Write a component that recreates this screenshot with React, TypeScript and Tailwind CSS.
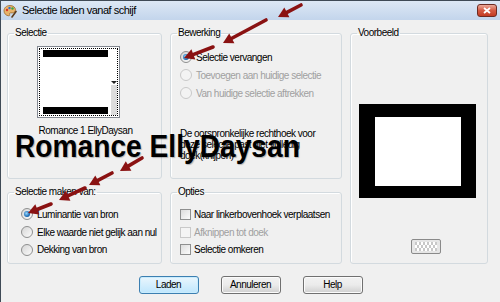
import React from 'react';

// Vista-stijl dialoog "Selectie laden vanaf schijf" met rode pijltjes en watermerk-tekst.

const arrows: [number, number, number, number][] = [
  [300, 4, 277, 16],
  [265, 19, 222, 42],
  [212, 46, 183, 57],
  [141, 157, 119, 170],
  [111, 172, 88, 184],
  [84, 187, 58, 199],
  [50, 203, 27, 212],
];

function Arrow({ t }: { t: [number, number, number, number] }) {
  const [x1, y1, x2, y2] = t;
  const dx = x2 - x1;
  const dy = y2 - y1;
  const len = Math.hypot(dx, dy);
  const ux = dx / len;
  const uy = dy / len;
  const L = 10;
  const W = 5.5;
  const bx = x2 - ux * L;
  const by = y2 - uy * L;
  const nx = -uy;
  const ny = ux;
  const pts = `${x2},${y2} ${bx + nx * W},${by + ny * W} ${bx - nx * W},${by - ny * W}`;
  return (
    <g>
      <line x1={x1} y1={y1} x2={bx + ux} y2={by + uy} stroke="#8a1212" strokeWidth={3.6} strokeLinecap="round" />
      <polygon points={pts} fill="#8a1212" />
    </g>
  );
}

const Radio = ({ checked, disabled }: { checked?: boolean; disabled?: boolean }) => (
  <span
    className={`w-[12px] h-[12px] rounded-full border flex items-center justify-center shrink-0 ${
      disabled ? 'border-[#c9c9c9] bg-[#f3f3f3]' : 'border-[#8e8f8f] bg-gradient-to-br from-[#d6d6d6] to-[#fbfbfb]'
    }`}
  >
    {checked && (
      <span className="w-[6px] h-[6px] rounded-full bg-[radial-gradient(circle_at_40%_40%,#9ad6fb,#1d6fb8_60%,#0c3f75)]" />
    )}
  </span>
);

const Check = ({ disabled }: { disabled?: boolean }) => (
  <span
    className={`w-[11px] h-[11px] border shrink-0 ${
      disabled ? 'border-[#c9c9c9] bg-[#f4f4f4]' : 'border-[#8e8f8f] bg-gradient-to-br from-[#dcdcdc] to-[#fcfcfc]'
    }`}
  />
);

const Group = ({ label, className, inner, children }: { label: string; className?: string; inner?: string; children?: React.ReactNode }) => (
  <fieldset className={`border border-[#d3dadf] rounded-[3px] shadow-[inset_1px_1px_0_#ffffff] ${className ?? ''}`}>
    <legend className="ml-[6px] px-[1px] leading-[12px]">{label}</legend>
    <div className={inner}>{children}</div>
  </fieldset>
);

const Button = ({ label, def }: { label: string; def?: boolean }) => (
  <button
    className={`w-[60px] h-[18px] rounded-[3px] border flex items-center justify-center leading-none ${
      def
        ? 'border-[#3c7fb1] bg-gradient-to-b from-[#eaf6fd] to-[#bee6fd] shadow-[inset_0_0_0_1px_#c9ecfd]'
        : 'border-[#707070] bg-gradient-to-b from-[#f2f2f2] via-[#ebebeb] to-[#cfcfcf] shadow-[inset_0_0_0_1px_#fbfbfb]'
    }`}
  >
    {label}
  </button>
);

export default function App() {
  return (
    <div className="w-[500px] h-[302px] relative overflow-hidden bg-[#f0f0f0] border-l border-t border-[#3f4a56] font-['Liberation_Sans',Arial,sans-serif] text-[10px] tracking-[-0.5px] text-black">
      {/* titelbalk */}
      <div className="h-[19px] flex items-center pl-[2px] pr-[3px] bg-gradient-to-b from-[#dde8f5] to-[#c3d5ec]">
        <svg width="14" height="14" viewBox="0 0 14 14" className="shrink-0">
          <path d="M7 1.5C3.5 1.5 1 3.8 1 6.8c0 2.8 2.2 5 4.8 5 1 0 1.2-.7.8-1.4-.4-.8.1-1.5 1-1.5h1.6c2 0 3.3-1.3 3.3-3C12.5 3.5 10.2 1.5 7 1.5z" fill="#e8b36a" stroke="#9a6a2e" strokeWidth="0.8" />
          <circle cx="4" cy="6" r="1.2" fill="#d8322b" />
          <circle cx="6.5" cy="4" r="1.2" fill="#2d6fd0" />
          <circle cx="9.5" cy="4.5" r="1.2" fill="#3aa845" />
          <path d="M9 13 13 7.5" stroke="#5b3a1a" strokeWidth="1.6" strokeLinecap="round" />
        </svg>
        <span className="ml-[5px] text-[11px] leading-none">Selectie laden vanaf schijf</span>
        <div className="ml-auto w-[20px] h-[13px] rounded-[3px] border border-[#6d2b22] bg-gradient-to-b from-[#e9a99a] via-[#d45a43] to-[#c33b22] flex items-center justify-center">
          <svg width="8" height="7" viewBox="0 0 8 7">
            <path d="M1 1 7 6M7 1 1 6" stroke="#fff" strokeWidth="1.8" />
          </svg>
        </div>
      </div>

      {/* inhoud */}
      <div className="pl-[6px] pt-[7px]">
        <div className="grid grid-cols-[155px_172px_138px] grid-rows-[152px_78px] gap-x-[8px] gap-y-[7px]">
          <Group label="Selectie" inner="pl-[29px]">
            <div className="mt-[7px] w-[83px] h-[72px] border border-[#828790] bg-white p-[1px]">
              <div className="w-full h-full border border-dotted border-black flex">
                <div className="flex-1 flex flex-col justify-between pl-[3px] pr-[3px] py-[1px]">
                  <div className="h-[7px] bg-black" />
                  <div className="h-[7px] bg-black" />
                </div>
                <div className="w-[6px] flex flex-col">
                  <div className="h-[32px]" />
                  <svg width="6" height="4" viewBox="0 0 6 4">
                    <path d="M0 0h6L3 3z" fill="#222" />
                  </svg>
                  <div className="flex-1 bg-[#dcdcdc]" />
                </div>
              </div>
            </div>
            <div className="mt-[7px] w-[97px] text-center leading-[12px]">Romance 1 EllyDaysan</div>
          </Group>

          <Group label="Bewerking" inner="pl-[9px]">
            <div className="mt-[9px] flex flex-col">
              <label className="h-[18px] flex items-center gap-[4px]">
                <Radio checked />
                <span>Selectie vervangen</span>
              </label>
              <label className="h-[18px] flex items-center gap-[4px] text-[#a0a0a0]">
                <Radio disabled />
                <span>Toevoegen aan huidige selectie</span>
              </label>
              <label className="h-[18px] flex items-center gap-[4px] text-[#a0a0a0]">
                <Radio disabled />
                <span>Van huidige selectie aftrekken</span>
              </label>
            </div>
            <p className="mt-[26px] leading-[11px]">
              De oorspronkelijke rechthoek voor
              <br />
              deze selectie past niet volledig
              <br />
              doek(knijpen)
            </p>
          </Group>

          <Group label="Voorbeeld" className="row-span-2" inner="pl-[8px]">
            <div className="mt-[65px] w-[117px] h-[94px] bg-black pt-[13px] pl-[16px]">
              <div className="w-[86px] h-[69px] bg-white" />
            </div>
            <div className="mt-[41px] ml-[52px] w-[30px] h-[15px] rounded-[2px] border border-[#8a8a8a] bg-[#e6e6e6] flex items-center justify-center">
              <svg width="22" height="9" viewBox="0 0 22 9">
                {Array.from({ length: 11 }).map((_, i) =>
                  [0, 1, 2].map(j => (
                    <rect key={`${i}-${j}`} x={i * 2} y={j * 3} width="2" height="3" fill={(i + j) % 2 ? '#ffffff' : '#c8c8c8'} />
                  ))
                )}
              </svg>
            </div>
          </Group>

          <Group label="Selectie maken van:" inner="pl-[13px]">
            <div className="mt-[7px] flex flex-col">
              <label className="h-[18px] flex items-center gap-[4px]">
                <Radio checked />
                <span>Luminantie van bron</span>
              </label>
              <label className="h-[18px] flex items-center gap-[4px]">
                <Radio />
                <span>Elke waarde niet gelijk aan nul</span>
              </label>
              <label className="h-[17px] flex items-center gap-[4px]">
                <Radio />
                <span>Dekking van bron</span>
              </label>
            </div>
          </Group>

          <Group label="Opties" inner="pl-[9px]">
            <div className="mt-[7px] flex flex-col">
              <label className="h-[18px] flex items-center gap-[3px]">
                <Check />
                <span>Naar linkerbovenhoek verplaatsen</span>
              </label>
              <label className="h-[18px] flex items-center gap-[3px] text-[#a0a0a0]">
                <Check disabled />
                <span>Afknippen tot doek</span>
              </label>
              <label className="h-[17px] flex items-center gap-[3px]">
                <Check />
                <span>Selectie omkeren</span>
              </label>
            </div>
          </Group>
        </div>

        <div className="mt-[12px] flex justify-center gap-[22px] pr-[6px]">
          <Button label="Laden" def />
          <Button label="Annuleren" />
          <Button label="Help" />
        </div>
      </div>

      {/* watermerk */}
      <div className="absolute left-[14px] top-[129px] origin-left scale-x-[0.88] text-[32px] font-bold leading-none tracking-normal whitespace-nowrap [text-shadow:1px_1px_1px_rgba(0,0,0,0.25)] pointer-events-none">
        Romance EllyDaysan
      </div>

      {/* pijltjes */}
      <svg className="absolute inset-0 pointer-events-none" width="500" height="302" viewBox="0 0 500 302">
        {arrows.map((a, i) => (
          <Arrow key={i} t={a} />
        ))}
      </svg>
    </div>
  );
}
